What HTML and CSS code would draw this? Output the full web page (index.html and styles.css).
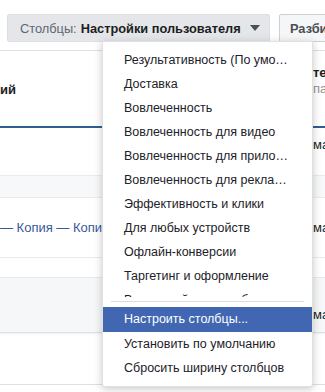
FILE: index.html
```html
<!DOCTYPE html>
<html lang="ru">
<head>
    <meta charset="UTF-8">
    <meta name="viewport" content="width=device-width, initial-scale=1.0">
    <title>Столбцы</title>
    <link rel="stylesheet" href="styles.css">
</head>
<body>
    <!-- Toolbar -->
    <div class="toolbar">
        <button class="btn btn-columns">
            <span class="btn-label">Столбцы:</span>
            <span class="btn-value">Настройки пользователя</span>
            <span class="caret"></span>
        </button>
        <button class="btn btn-breakdown">Разбивка</button>
    </div>

    <!-- Table -->
    <div class="table">
        <div class="row row-head">
            <div class="cell cell-name"><b>ий</b></div>
            <div class="cell cell-last">
                <b>те</b>
                <span class="sub">па</span>
            </div>
        </div>
        <div class="row row-a">
            <div class="cell cell-name"></div>
            <div class="cell cell-last">ма</div>
        </div>
        <div class="row row-band"></div>
        <div class="row row-b">
            <div class="cell cell-name"><a href="#">— Копия — Копия</a></div>
            <div class="cell cell-last">ма</div>
        </div>
        <div class="row row-gap"></div>
        <div class="row row-c">
            <div class="cell cell-name"></div>
            <div class="cell cell-last">ма</div>
        </div>
        <div class="row row-end"></div>

        <!-- Columns dropdown -->
        <div class="menu">
            <ul class="menu-list">
                <li>Результативность (По умолчанию)</li>
                <li>Доставка</li>
                <li>Вовлеченность</li>
                <li>Вовлеченность для видео</li>
                <li>Вовлеченность для приложения</li>
                <li>Вовлеченность для рекламы на Странице</li>
                <li>Эффективность и клики</li>
                <li>Для любых устройств</li>
                <li>Офлайн-конверсии</li>
                <li>Таргетинг и оформление</li>
                <li>Взаимодействие с объявлениями</li>
            </ul>
            <div class="menu-divider"></div>
            <ul class="menu-actions">
                <li class="active">Настроить столбцы...</li>
                <li>Установить по умолчанию</li>
                <li>Сбросить ширину столбцов</li>
            </ul>
        </div>
    </div>
</body>
</html>
```

FILE: styles.css
```css
* {
    margin: 0;
    padding: 0;
    box-sizing: border-box;
    font-family: 'Liberation Sans', Arial, sans-serif;
}

body {
    width: 325px;
    height: 392px;
    overflow: hidden;
    background: #fff;
    color: #1c1e21;
    font-size: 13px;
}

/* Toolbar */
.toolbar {
    display: flex;
    gap: 9px;
    height: 51px;
    padding: 14px 0 0 7px;
    border-bottom: 1px solid #dddfe2;
    white-space: nowrap;
}

.btn {
    display: flex;
    align-items: center;
    height: 28px;
    border: 1px solid transparent;
    border-radius: 2px;
    font-size: 12.8px;
    font-weight: bold;
    cursor: pointer;
}

.btn-columns {
    width: 263px;
    padding: 0 12px;
    background: #e4e6ea;
    border-color: #dcdee2;
}

.btn-label {
    color: #606770;
    font-weight: normal;
    margin-right: 4px;
}

.btn-value {
    color: #1c1e21;
}

.caret {
    margin-left: 9px;
    border-left: 5px solid transparent;
    border-right: 5px solid transparent;
    border-top: 6px solid #4b4f56;
}

.btn-breakdown {
    padding: 0 10px;
    background: #f5f6f7;
    border-color: #ccd0d5;
    color: #4b4f56;
}

/* Table */
.table {
    position: relative;
}

.row {
    display: flex;
    justify-content: space-between;
    border-bottom: 1px solid #e9ebee;
}

.cell {
    display: flex;
    flex-direction: column;
    justify-content: center;
    overflow: hidden;
    white-space: nowrap;
}

.cell-name {
    width: 120px;
}

.cell-name a {
    color: #385898;
    text-decoration: none;
}

.cell-last {
    width: 12px;
    color: #1c1e21;
}

.row-head {
    height: 77px;
    border-bottom: 2px solid #2f5f8c;
}

.row-head .cell-name {
    padding-top: 1px;
}

.row-head .cell-last {
    padding-bottom: 15px;
    line-height: 16px;
}

.sub {
    color: #90949c;
}

.row-a {
    height: 48px;
}

.row-a .cell-last {
    justify-content: flex-start;
    padding-top: 9px;
}

.row-band {
    height: 22px;
    background: #f7f8fa;
}

.row-b {
    height: 60px;
}

.row-gap {
    height: 20px;
}

.row-c {
    height: 55px;
    background: #f6f7f9;
    border-bottom-color: #dddfe2;
    box-shadow: 0 1px 2px rgba(0, 0, 0, 0.06);
}

.row-c .cell-last {
    justify-content: flex-start;
    padding-top: 29px;
}

.row-end {
    height: 52px;
    border-bottom-color: #dddfe2;
}

/* Dropdown menu */
.menu {
    position: absolute;
    top: -10px;
    left: 102px;
    width: 211px;
    background: #fff;
    border: 1px solid rgba(0, 0, 0, 0.12);
    border-radius: 0 0 3px 3px;
    box-shadow: 0 2px 8px rgba(0, 0, 0, 0.22);
    padding-bottom: 6px;
    font-family: Roboto, 'Liberation Sans', sans-serif;
    font-size: 12.5px;
    color: #1d2129;
}

.menu ul {
    list-style: none;
}

.menu li {
    height: 24px;
    line-height: 24px;
    padding: 0 18px 0 21px;
    overflow: hidden;
    white-space: nowrap;
    text-overflow: ellipsis;
}

.menu-list {
    height: 255px;
    padding-top: 6px;
    overflow: hidden;
}

.menu-divider {
    height: 1px;
    margin: 4px 8px 5px;
    background: #dadde1;
}

.menu-actions li.active {
    height: 25px;
    line-height: 25px;
    background: #4267b2;
    color: #fff;
}
```
